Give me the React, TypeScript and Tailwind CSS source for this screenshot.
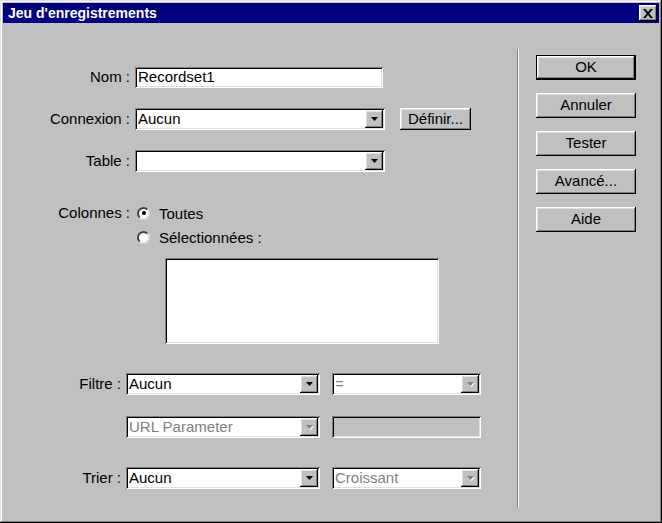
const raised =
  "bg-[#c0c0c0] shadow-[inset_-1px_-1px_#000,inset_1px_1px_#fff,inset_-2px_-2px_#808080,inset_2px_2px_#dfdfdf]";
const sunken =
  "shadow-[inset_1px_1px_#808080,inset_-1px_-1px_#fff,inset_2px_2px_#000,inset_-2px_-2px_#dfdfdf]";

const Arrow = ({ disabled }: { disabled?: boolean }) => (
  <div className={`${raised} w-[18px] h-full flex items-center justify-center shrink-0`}>
    <svg width="9" height="6" viewBox="0 0 9 6">
      {disabled && <path d="M2 2h7l-3.5 4z" fill="#fff" />}
      <path d="M1 1h7l-3.5 4z" fill={disabled ? "#808080" : "#000"} />
    </svg>
  </div>
);

const Select = ({
  value,
  width,
  disabled,
}: {
  value: string;
  width: string;
  disabled?: boolean;
}) => (
  <div className={`${width} h-[22px] bg-white ${sunken} p-[2px] flex`}>
    <div
      className={`flex-1 flex items-center pl-[1px] ${
        disabled ? "text-[#808080]" : "text-black"
      }`}
    >
      {value}
    </div>
    <Arrow disabled={disabled} />
  </div>
);

const Radio = ({ checked }: { checked?: boolean }) => (
  <div className="w-[13px] h-[13px] rounded-full bg-white border-2 border-t-[#404040] border-l-[#404040] border-b-[#dfdfdf] border-r-[#dfdfdf] flex items-center justify-center">
    {checked && <div className="w-[4px] h-[4px] rounded-full bg-black" />}
  </div>
);

const Button = ({ label, isDefault }: { label: string; isDefault?: boolean }) => (
  <div
    className={`w-[100px] h-[25px] flex items-center justify-center ${
      isDefault ? "border border-black" : ""
    }`}
  >
    <div className={`${raised} w-full h-full flex items-center justify-center`}>
      {label}
    </div>
  </div>
);

export default function App() {
  return (
    <div
      className="w-[662px] h-[523px] bg-[#c0c0c0] p-[3px] flex flex-col text-[15px] text-black shadow-[inset_-1px_-1px_#000,inset_1px_1px_#dfdfdf,inset_-2px_-2px_#808080,inset_2px_2px_#fff]"
      style={{ fontFamily: '"Liberation Sans", Arial, sans-serif' }}
    >
      {/* Title bar */}
      <div className="h-[20px] bg-[#000080] flex items-center justify-between pl-[5px] pr-[2px] shrink-0">
        <span className="text-white font-bold text-[14px]">Jeu d'enregistrements</span>
        <div className={`${raised} w-[18px] h-[16px] flex items-center justify-center`}>
          <svg width="10" height="9" viewBox="0 0 10 9">
            <path d="M0 0h2.5l2.5 3 2.5-3h2.5l-3.7 4.5 3.7 4.5h-2.5l-2.5-3-2.5 3h-2.5l3.7-4.5z" fill="#000" />
          </svg>
        </div>
      </div>

      <div className="flex flex-1">
        {/* Form */}
        <div className="w-[511px] pt-[44px] flex flex-col">
          <div className="flex items-center h-[21px]">
            <div className="w-[128px] text-right pr-[1px]">Nom :</div>
            <div className={`ml-[4px] w-[248px] h-[21px] bg-white ${sunken} flex items-center pl-[3px]`}>
              Recordset1
            </div>
          </div>

          <div className="flex items-center h-[22px] mt-[20px]">
            <div className="w-[128px] text-right pr-[1px]">Connexion :</div>
            <div className="ml-[4px]">
              <Select value="Aucun" width="w-[250px]" />
            </div>
            <div className="ml-[15px] w-[71px] h-[22px]">
              <div className={`${raised} w-full h-full flex items-center justify-center`}>
                Définir...
              </div>
            </div>
          </div>

          <div className="flex items-center h-[22px] mt-[20px]">
            <div className="w-[128px] text-right pr-[1px]">Table :</div>
            <div className="ml-[4px]">
              <Select value="" width="w-[250px]" />
            </div>
          </div>

          <div className="flex items-center h-[16px] mt-[33px]">
            <div className="w-[128px] text-right pr-[1px]">Colonnes :</div>
            <div className="ml-[6px]">
              <Radio checked />
            </div>
            <div className="ml-[9px] mt-[3px]">Toutes</div>
          </div>

          <div className="flex items-center h-[16px] mt-[8px]">
            <div className="ml-[134px]">
              <Radio />
            </div>
            <div className="ml-[9px] mt-[3px]">Sélectionnées :</div>
          </div>

          <div className={`ml-[162px] mt-[13px] w-[274px] h-[86px] bg-white ${sunken}`} />

          <div className="flex items-center h-[22px] mt-[29px]">
            <div className="w-[119px] text-right pr-[1px]">Filtre :</div>
            <div className="ml-[4px]">
              <Select value="Aucun" width="w-[194px]" />
            </div>
            <div className="ml-[12px]">
              <Select value="=" width="w-[149px]" disabled />
            </div>
          </div>

          <div className="flex items-center h-[22px] mt-[21px]">
            <div className="ml-[123px]">
              <Select value="URL Parameter" width="w-[194px]" disabled />
            </div>
            <div className={`ml-[12px] w-[149px] h-[22px] bg-[#c0c0c0] ${sunken}`} />
          </div>

          <div className="flex items-center h-[22px] mt-[29px]">
            <div className="w-[119px] text-right pr-[1px]">Trier :</div>
            <div className="ml-[4px]">
              <Select value="Aucun" width="w-[194px]" />
            </div>
            <div className="ml-[12px]">
              <Select value="Croissant" width="w-[149px]" disabled />
            </div>
          </div>
        </div>

        {/* Separator */}
        <div className="ml-[3px] mt-[26px] h-[459px] w-[2px] border-l border-l-[#808080] border-r border-r-white" />

        {/* Buttons */}
        <div className="pl-[17px] pt-[32px] flex flex-col gap-[13px]">
          <Button label="OK" isDefault />
          <Button label="Annuler" />
          <Button label="Tester" />
          <Button label="Avancé..." />
          <Button label="Aide" />
        </div>
      </div>
    </div>
  );
}
